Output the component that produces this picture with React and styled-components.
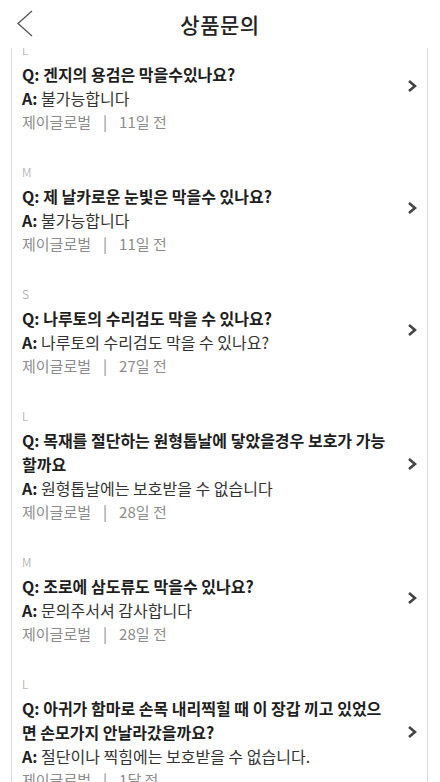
import React from "react";
import styled, { createGlobalStyle } from "styled-components";

const GlobalStyle = createGlobalStyle`
  html, body {
    margin: 0;
    padding: 0;
    background: #fff;
  }
  body {
    font-family: "Noto Sans CJK KR", "Noto Sans", sans-serif;
  }
`;

const Screen = styled.div`
  width: 440px;
  height: 782px;
  display: flex;
  flex-direction: column;
  overflow: hidden;
  background: #fff;
`;

const Header = styled.header`
  height: 48px;
  flex-shrink: 0;
  display: grid;
  grid-template-columns: 48px 1fr 48px;
  align-items: center;
  background: #fff;
`;

const BackButton = styled.button`
  border: none;
  background: none;
  padding: 0 0 0 15px;
  height: 48px;
  display: flex;
  align-items: center;
  cursor: pointer;
`;

const Title = styled.h1`
  margin: 0;
  text-align: center;
  font-size: 21px;
  font-weight: 500;
  color: #222;
  letter-spacing: 0.5px;
`;

const Body = styled.div`
  flex: 1;
  overflow: hidden;
`;

const Card = styled.ul`
  list-style: none;
  margin: -23px 12px 0 11px;
  padding: 0;
  border-left: 1px solid #dcdcdc;
  border-right: 1px solid #dcdcdc;
  background: #fff;
`;

const Item = styled.li`
  display: flex;
  align-items: center;
  gap: 17px;
  padding: 13px 10px;
`;

const Content = styled.div`
  flex: 1;
  min-width: 0;
  line-height: 24px;
`;

const Size = styled.div`
  font-size: 12px;
  color: #a0a0a0;
  font-weight: 300;
`;

const Question = styled.div`
  font-size: 16px;
  font-weight: 700;
  color: #1e1e1e;
`;

const Answer = styled.div`
  font-size: 16px;
  color: #333;
  b {
    font-weight: 700;
    color: #1e1e1e;
  }
`;

const Meta = styled.div`
  font-size: 15px;
  color: #8c8c8c;
`;

const Bar = styled.span`
  margin: 0 12px;
`;

const Arrow = styled.svg`
  width: 10px;
  height: 14px;
  flex-shrink: 0;
`;

const items = [
  { size: "L", q: "겐지의 용검은 막을수있나요?", a: "불가능합니다", when: "11일 전" },
  { size: "M", q: "제 날카로운 눈빛은 막을수 있나요?", a: "불가능합니다", when: "11일 전" },
  { size: "S", q: "나루토의 수리검도 막을 수 있나요?", a: "나루토의 수리검도 막을 수 있나요?", when: "27일 전" },
  {
    size: "L",
    q: "목재를 절단하는 원형톱날에 닿았을경우 보호가 가능할까요",
    a: "원형톱날에는 보호받을 수 없습니다",
    when: "28일 전",
  },
  { size: "M", q: "조로에 삼도류도 막을수 있나요?", a: "문의주서셔 감사합니다", when: "28일 전" },
  {
    size: "L",
    q: "아귀가 함마로 손목 내리찍힐 때 이 장갑 끼고 있었으면 손모가지 안날라갔을까요?",
    a: "절단이나 찍힘에는 보호받을 수 없습니다.",
    when: "1달 전",
  },
];

const App = () => {
  return (
    <>
      <GlobalStyle />
      <Screen>
        <Header>
          <BackButton aria-label="뒤로">
            <svg width="18" height="28" viewBox="0 0 18 28">
              <path d="M17 1 L3 13.5 L17 26" fill="none" stroke="#555" strokeWidth="1.3" />
            </svg>
          </BackButton>
          <Title>상품문의</Title>
          <span />
        </Header>
        <Body>
          <Card>
            {items.map((item, index) => (
              <Item key={index}>
                <Content>
                  <Size>{item.size}</Size>
                  <Question>Q: {item.q}</Question>
                  <Answer>
                    <b>A:</b> {item.a}
                  </Answer>
                  <Meta>
                    제이글로벌<Bar>|</Bar>{item.when}
                  </Meta>
                </Content>
                <Arrow viewBox="0 0 10 14">
                  <path d="M2 2 L8 7 L2 12" fill="none" stroke="#444" strokeWidth="2.6" />
                </Arrow>
              </Item>
            ))}
          </Card>
        </Body>
      </Screen>
    </>
  );
};

export default App;
